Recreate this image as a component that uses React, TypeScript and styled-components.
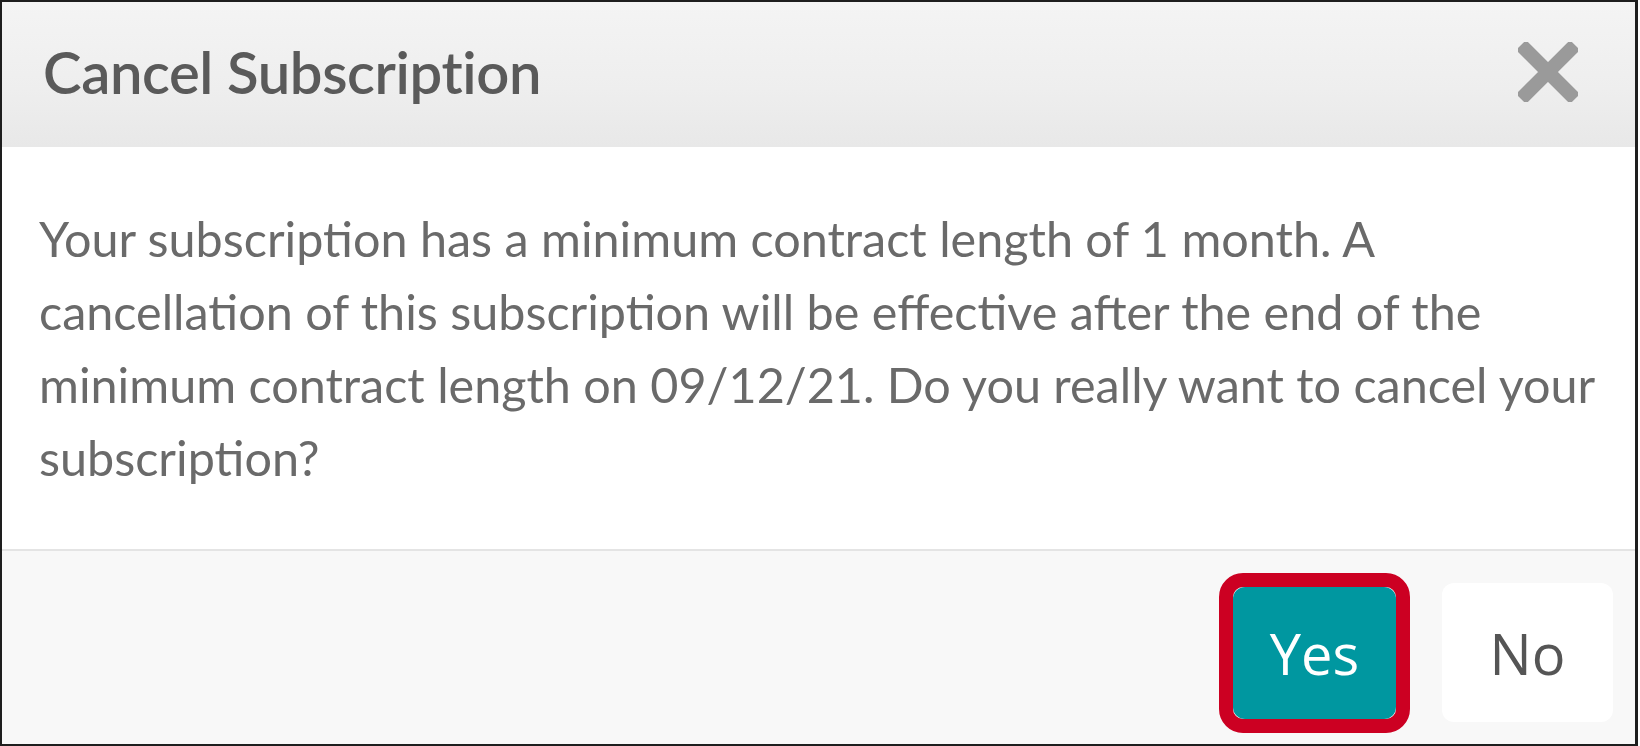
import styled, { createGlobalStyle } from 'styled-components';

const GlobalStyle = createGlobalStyle`
  html, body {
    margin: 0;
    padding: 0;
    background: #ffffff;
  }
  * {
    box-sizing: border-box;
  }
`;

const Dialog = styled.div`
  width: 1638px;
  height: 746px;
  border: 2px solid #1e1e1e;
  border-right-width: 3px;
  display: flex;
  flex-direction: column;
  background: #ffffff;
  overflow: hidden;
`;

const Header = styled.div`
  height: 145px;
  flex-shrink: 0;
  display: flex;
  align-items: center;
  justify-content: space-between;
  padding: 0 56px 6px 41px;
  background: linear-gradient(to bottom, #f4f4f4 0%, #eeeeee 60%, #e8e8e8 100%);
`;

const Title = styled.h2`
  margin: 0;
  font-family: Lato, 'Noto Sans', sans-serif;
  font-weight: 600;
  font-size: 58px;
  color: #5a5a5a;
  letter-spacing: -0.4px;
`;

const CloseButton = styled.button`
  border: none;
  background: transparent;
  padding: 0;
  width: 62px;
  height: 62px;
  display: flex;
  align-items: center;
  justify-content: center;
  cursor: pointer;
`;

const Body = styled.div`
  flex: 1;
  padding: 55px 14px 0 37px;
  font-family: Lato, 'Noto Sans', sans-serif;
  font-weight: 400;
  font-size: 48.5px;
  line-height: 73px;
  color: #6a6a6a;
`;

const Message = styled.p`
  margin: 0;
`;

const Footer = styled.div`
  height: 195px;
  flex-shrink: 0;
  border-top: 2px solid #e4e4e4;
  background: #f8f8f8;
  display: flex;
  align-items: center;
  justify-content: flex-end;
  gap: 46px;
  padding: 10px 22px 0 0;
`;

const Focus = styled.div`
  border: 14px solid #cc0022;
  border-radius: 24px;
  margin: -14px;
  display: flex;
`;

const Button = styled.button<{ $primary?: boolean }>`
  width: ${(p) => (p.$primary ? '163px' : '171px')};
  height: ${(p) => (p.$primary ? '132px' : '139px')};
  border: none;
  border-radius: 12px;
  font-family: 'Open Sans', 'Noto Sans', sans-serif;
  font-size: 56px;
  font-weight: 400;
  color: ${(p) => (p.$primary ? '#ffffff' : '#555555')};
  background: ${(p) => (p.$primary ? '#0097a0' : '#ffffff')};
  cursor: pointer;
  padding: 0;
`;

const CloseIcon = () => (
  <svg width="60" height="60" viewBox="0 0 60 60">
    <path d="M8 8 L52 52 M52 8 L8 52" stroke="#9a9a9a" strokeWidth="14" strokeLinecap="square" />
  </svg>
);

export default function App() {
  return (
    <>
      <GlobalStyle />
      <Dialog>
        <Header>
          <Title>Cancel Subscription</Title>
          <CloseButton aria-label="Close">
            <CloseIcon />
          </CloseButton>
        </Header>
        <Body>
          <Message>
            Your subscription has a minimum contract length of 1 month. A cancellation of this subscription will be
            effective after the end of the minimum contract length on 09/12/21. Do you really want to cancel your
            subscription?
          </Message>
        </Body>
        <Footer>
          <Focus>
            <Button $primary>Yes</Button>
          </Focus>
          <Button>No</Button>
        </Footer>
      </Dialog>
    </>
  );
}
